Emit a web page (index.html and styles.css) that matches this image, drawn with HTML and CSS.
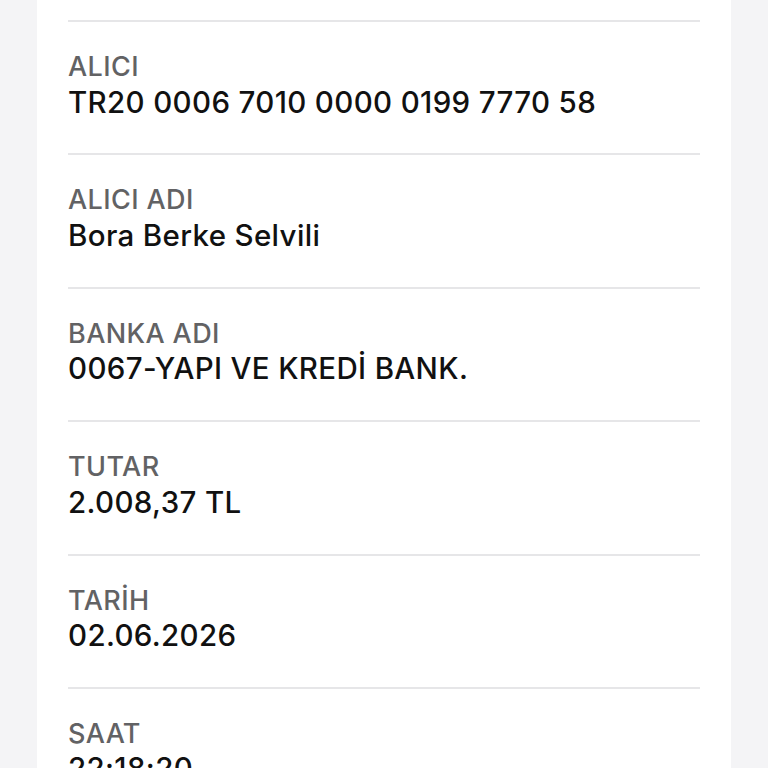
FILE: index.html
```html
<!DOCTYPE html>
<html lang="tr">
  <head>
    <meta charset="UTF-8">
    <meta name="viewport" content="width=device-width, initial-scale=1.0">
    <title>İşlem Detayı</title>
    <link rel="stylesheet" href="styles.css">
  </head>
  <body>
    <div class="kart">
      <div class="ust"></div>
      <div class="satir">
        <div class="etiket">ALICI</div>
        <div class="deger">TR20 0006 7010 0000 0199 7770 58</div>
      </div>
      <div class="satir">
        <div class="etiket">ALICI ADI</div>
        <div class="deger">Bora Berke Selvili</div>
      </div>
      <div class="satir">
        <div class="etiket">BANKA ADI</div>
        <div class="deger">0067-YAPI VE KREDİ BANK.</div>
      </div>
      <div class="satir">
        <div class="etiket">TUTAR</div>
        <div class="deger">2.008,37 TL</div>
      </div>
      <div class="satir">
        <div class="etiket">TARİH</div>
        <div class="deger">02.06.2026</div>
      </div>
      <div class="satir">
        <div class="etiket">SAAT</div>
        <div class="deger">22:18:20</div>
      </div>
    </div>
  </body>
</html>
```

FILE: styles.css
```css
body {
    margin: 0;
    background-color: #f4f4f6;
    font-family: Inter, "Noto Sans", sans-serif;
}
.kart {
    background-color: #ffffff;
    margin: 0 37px;
    padding: 0 31px;
    min-height: 900px;
}
.ust {
    height: 20px;
}
.satir {
    border-top: 2px solid #e6e6e8;
    padding: 28px 0 32.9px;
}
.etiket {
    font-size: 27px;
    line-height: 34px;
    font-weight: 500;
    letter-spacing: 0.4px;
    color: #626264;
}
.deger {
    font-size: 29.5px;
    line-height: 37px;
    font-weight: 500;
    letter-spacing: 0.35px;
    color: #111111;
    margin-top: -0.5px;
}
```
